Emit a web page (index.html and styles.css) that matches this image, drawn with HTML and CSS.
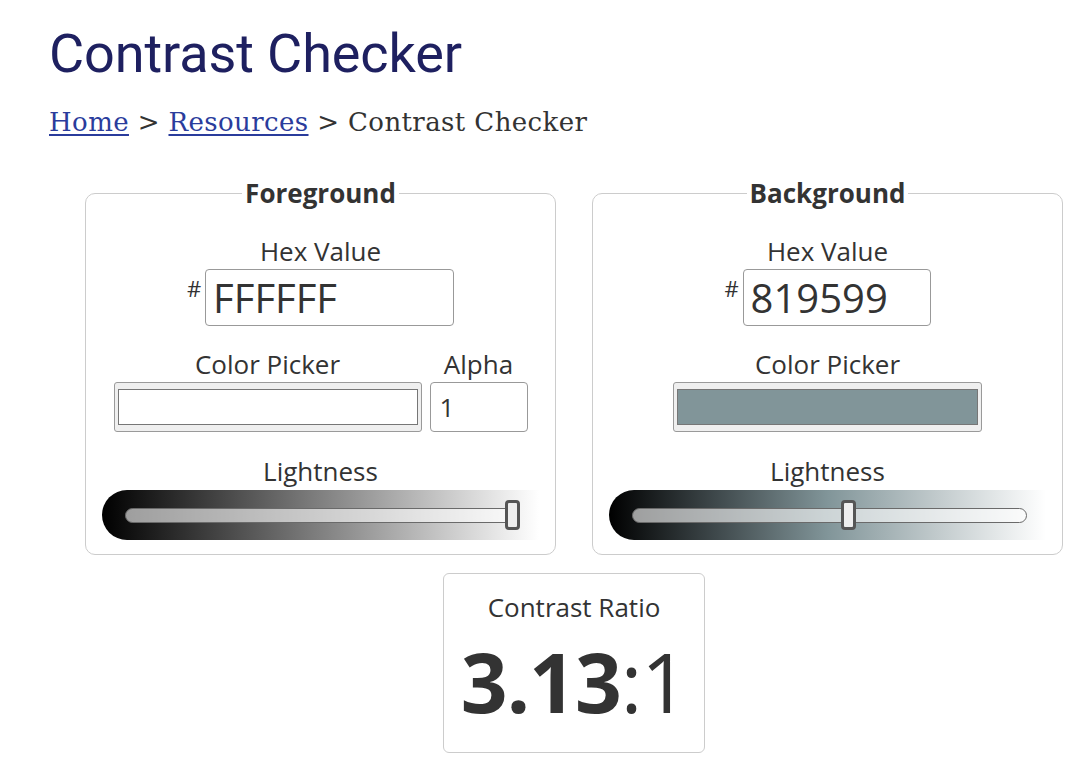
FILE: index.html
```html
<!DOCTYPE html>
<html lang="en">
<head>
<meta charset="utf-8">
<title>Contrast Checker</title>
<link rel="stylesheet" href="styles.css">
</head>
<body>
<main class="page">
  <h1 class="title">Contrast Checker</h1>
  <nav class="crumbs"><a href="#">Home</a> &gt; <a href="#">Resources</a> &gt; Contrast Checker</nav>

  <section class="checker">
    <div class="panels">
      <fieldset class="panel">
        <legend class="panel-title">Foreground</legend>
        <div class="field">
          <label class="label">Hex Value</label>
          <div class="hex-row">
            <span class="hash">#</span>
            <input class="hex hex-fg" type="text" value="FFFFFF">
          </div>
        </div>
        <div class="picker-row">
          <div class="field">
            <label class="label">Color Picker</label>
            <div class="swatch-box swatch-fg"><div class="swatch" style="background:#ffffff"></div></div>
          </div>
          <div class="field">
            <label class="label">Alpha</label>
            <input class="alpha" type="text" value="1">
          </div>
        </div>
        <div class="field">
          <label class="label">Lightness</label>
          <div class="slider slider-fg">
            <div class="track">
              <div class="thumb" style="left:100%"></div>
            </div>
          </div>
        </div>
      </fieldset>

      <fieldset class="panel">
        <legend class="panel-title">Background</legend>
        <div class="field">
          <label class="label">Hex Value</label>
          <div class="hex-row">
            <span class="hash">#</span>
            <input class="hex hex-bg" type="text" value="819599">
          </div>
        </div>
        <div class="picker-row">
          <div class="field">
            <label class="label">Color Picker</label>
            <div class="swatch-box swatch-bg"><div class="swatch" style="background:#819599"></div></div>
          </div>
        </div>
        <div class="field">
          <label class="label">Lightness</label>
          <div class="slider slider-bg">
            <div class="track">
              <div class="thumb" style="left:55%"></div>
            </div>
          </div>
        </div>
      </fieldset>
    </div>

    <div class="ratio">
      <div class="ratio-label">Contrast Ratio</div>
      <div class="ratio-value"><strong>3.13</strong>:1</div>
    </div>
  </section>
</main>
</body>
</html>
```

FILE: styles.css
```css
* { box-sizing: border-box; }

html, body {
  margin: 0;
  padding: 0;
  background: #ffffff;
}

body {
  font-family: "Open Sans", "Noto Sans", sans-serif;
  color: #333333;
}

.page {
  padding: 22px 0 0 49px;
}

.title {
  margin: 0;
  font-family: Roboto, "Noto Sans", sans-serif;
  font-weight: 400;
  font-size: 54px;
  line-height: 64px;
  color: #1e2060;
  letter-spacing: -0.1px;
}

.crumbs {
  margin-top: 19px;
  font-family: "DejaVu Serif", "Liberation Serif", serif;
  font-size: 26px;
  line-height: 34px;
  letter-spacing: 0.4px;
  color: #333333;
}

.crumbs a {
  color: #2a3c9c;
  text-decoration: underline;
  text-decoration-thickness: 2px;
  text-underline-offset: 3px;
}

.checker {
  width: 978px;
  margin: 37px 0 0 36px;
  display: flex;
  flex-direction: column;
  align-items: center;
  gap: 18px;
}

.panels {
  display: flex;
  gap: 36px;
  width: 100%;
}

.panel {
  flex: 1;
  margin: 0;
  min-width: 0;
  border: 1px solid #cccccc;
  border-radius: 10px;
  padding: 23px 16px 14px;
  display: flex;
  flex-direction: column;
  align-items: center;
}

.panel-title {
  margin: 0 auto;
  font-weight: 700;
  font-size: 26px;
  line-height: 35px;
  padding: 0 3px;
  color: #333333;
}

.field {
  display: flex;
  flex-direction: column;
  align-items: center;
}

.label {
  font-size: 26px;
  line-height: 35px;
  color: #333333;
}

.hex-row {
  display: flex;
  align-items: flex-start;
  gap: 4px;
}

.hash {
  font-size: 22px;
  line-height: 22px;
  margin-top: 8px;
  color: #333333;
}

.hex {
  height: 57px;
  border: 1px solid #999999;
  border-radius: 4px;
  padding: 0 7px;
  font-family: "Open Sans", "Noto Sans", sans-serif;
  font-size: 40px;
  color: #333333;
  background: #ffffff;
  outline: none;
}

.hex-fg { width: 249px; }
.hex-bg { width: 188px; }

.picker-row {
  display: flex;
  gap: 8px;
  margin-top: 21px;
  align-items: flex-end;
}

.swatch-box {
  height: 50px;
  border: 1px solid #9a9a9a;
  border-radius: 3px;
  background: #efefef;
  padding: 6px 3px;
}

.swatch-fg { width: 308px; }
.swatch-bg { width: 309px; }

.swatch {
  width: 100%;
  height: 100%;
  border: 1px solid #767676;
}

.alpha {
  width: 98px;
  height: 50px;
  border: 1px solid #999999;
  border-radius: 4px;
  padding: 0 9px;
  font-family: "Open Sans", "Noto Sans", sans-serif;
  font-size: 26px;
  color: #333333;
  background: #ffffff;
  outline: none;
}

.panel > .field:last-child {
  margin-top: 22px;
  align-self: stretch;
}

.slider {
  align-self: stretch;
  height: 50px;
  border-radius: 25px 0 0 25px;
  padding: 0 19px 0 23px;
  display: flex;
  align-items: center;
  margin-top: 1px;
}

.slider-fg {
  background: linear-gradient(to right, #000000 0%, #808080 50%, #ffffff 100%);
}

.slider-bg {
  background: linear-gradient(to right, #000000 0%, #404a4d 25%, #819599 50%, #c1cacc 75%, #ffffff 100%);
}

.track {
  position: relative;
  flex: 1;
  height: 15px;
  border: 1px solid #6a6a6a;
  border-radius: 8px;
  background: rgba(255, 255, 255, 0.6);
}

.thumb {
  position: absolute;
  top: 50%;
  width: 15px;
  height: 30px;
  margin-left: -15px;
  transform: translate(calc(var(--shift, 0px)), -50%);
  border: 3px solid #555555;
  border-radius: 4px;
  background: #eeeeee;
}

.slider-fg .thumb {
  --shift: 1px;
}

.slider-bg .thumb {
  --shift: 7px;
}

.ratio {
  border: 1px solid #cccccc;
  border-radius: 6px;
  padding: 16px 24px 15px;
  display: flex;
  flex-direction: column;
  align-items: center;
  width: 262px;
}

.ratio-label {
  font-size: 26px;
  line-height: 35px;
  color: #333333;
}

.ratio-value {
  font-size: 82px;
  line-height: 112px;
  color: #333333;
  letter-spacing: -1px;
}

.ratio-value strong {
  font-weight: 700;
}
```
